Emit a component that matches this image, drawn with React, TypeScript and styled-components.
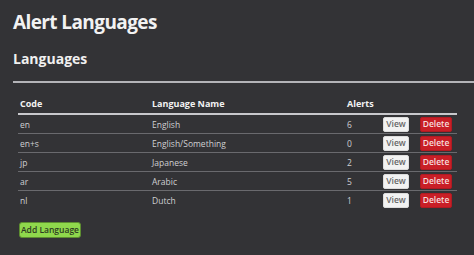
import React from "react";
import styled, { createGlobalStyle } from "styled-components";

const GlobalStyle = createGlobalStyle`
  html, body {
    margin: 0;
    padding: 0;
    background: #333336;
    font-family: "Open Sans", "Liberation Sans", sans-serif;
    color: #ececec;
    overflow: hidden;
  }
`;

const Page = styled.div`
  width: 474px;
  height: 255px;
  padding: 9px 0 0 13px;
  box-sizing: border-box;
  overflow: hidden;
`;

const Title = styled.h1`
  margin: 0;
  font-size: 19px;
  font-weight: 700;
  letter-spacing: -0.6px;
  line-height: 26px;
  color: #f2f2f2;
`;

const SectionTitle = styled.h2`
  margin: 14px 0 0;
  font-size: 14px;
  font-weight: 700;
  line-height: 20px;
  color: #f0f0f0;
`;

const Rule = styled.div`
  margin-top: 12px;
  height: 2px;
  width: 480px;
  background: #b4b4b8;
`;

const Table = styled.table`
  margin: 10px 0 0 5px;
  width: 439px;
  border-collapse: collapse;
  table-layout: fixed;
  font-size: 8.5px;
`;

const Th = styled.th<{ $w: number }>`
  width: ${(p) => p.$w}px;
  text-align: left;
  font-weight: 700;
  font-size: 9px;
  color: #f2f2f2;
  padding: 0 0 0 2px;
  height: 20px;
  border-bottom: 2px solid #c8c8cc;
`;

const Tr = styled.tr`
  &:not(:last-child) td {
    border-bottom: 1px solid #6a6a6e;
  }
`;

const Td = styled.td`
  padding: 0 0 0 2px;
  height: 18px;
  color: #cfcfd2;
  vertical-align: middle;
`;

const Button = styled.button<{ $variant: "view" | "delete" | "add" }>`
  font-family: inherit;
  font-size: 8.5px;
  font-weight: 600;
  line-height: 1;
  border-radius: 2px;
  cursor: pointer;
  padding: 0;
  height: 15px;
  display: inline-flex;
  align-items: center;
  justify-content: center;
  ${(p) =>
    p.$variant === "view"
      ? `background:#f2f2f2;color:#666;border:1px solid #dcdcdc;width:26px;`
      : p.$variant === "delete"
      ? `background:#c91f27;color:#f6dede;border:1px solid #b01a22;width:32px;`
      : `background:#8fd84c;color:#2d3a22;border:1px solid #5d8d30;width:62px;height:16px;border-radius:3px;`}
`;

const Footer = styled.div`
  display: flex;
  margin: 13px 0 0 6px;
`;

const rows = [
  { code: "en", name: "English", alerts: 6 },
  { code: "en+s", name: "English/Something", alerts: 0 },
  { code: "jp", name: "Japanese", alerts: 2 },
  { code: "ar", name: "Arabic", alerts: 5 },
  { code: "nl", name: "Dutch", alerts: 1 },
];

export default function App() {
  return (
    <>
      <GlobalStyle />
      <Page>
        <Title>Alert Languages</Title>
        <SectionTitle>Languages</SectionTitle>
        <Rule />
        <Table>
          <thead>
            <tr>
              <Th $w={130}>Code</Th>
              <Th $w={193}>Language Name</Th>
              <Th $w={34}>Alerts</Th>
              <Th $w={35}></Th>
              <Th $w={37}></Th>
            </tr>
          </thead>
          <tbody>
            {rows.map((r) => (
              <Tr key={r.code}>
                <Td>{r.code}</Td>
                <Td>{r.name}</Td>
                <Td>{r.alerts}</Td>
                <Td>
                  <Button $variant="view">View</Button>
                </Td>
                <Td>
                  <Button $variant="delete">Delete</Button>
                </Td>
              </Tr>
            ))}
          </tbody>
        </Table>
        <Footer>
          <Button $variant="add">Add Language</Button>
        </Footer>
      </Page>
    </>
  );
}
